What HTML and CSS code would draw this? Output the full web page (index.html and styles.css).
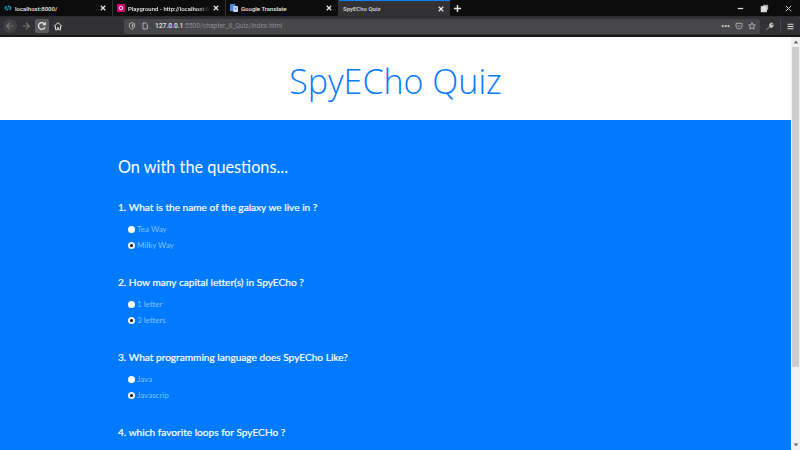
FILE: index.html
```html
<!DOCTYPE html>
<html lang="en">
<head>
    <meta charset="UTF-8">
    <meta name="viewport" content="width=device-width, initial-scale=1.0">
    <title>SpyECho Quiz</title>
    <link rel="stylesheet" href="styles.css">
</head>
<body>
    <!-- Tabs -->
    <div class="tabs">
        <div class="tab">
            <svg class="favicon" viewBox="0 0 12 12"><path d="M4 3 1.500 6 4 9M8 3l2.500 3L8 9" fill="none" stroke="#1fb6d8" stroke-width="1.600"/><path d="M7 2 5 10" stroke="#1fb6d8" stroke-width="1.200"/></svg>
            <span class="tab-title">localhost:8000/</span>
            <svg class="tab-close" viewBox="0 0 8 8"><path d="M1 1l6 6M7 1 1 7" stroke="#eee" stroke-width="1.500"/></svg>
        </div>
        <div class="tab">
            <svg class="favicon" viewBox="0 0 12 12"><rect width="12" height="12" rx="1.500" fill="#d6066f"/><circle cx="6" cy="6" r="2.600" fill="none" stroke="#fff" stroke-width="1.400"/></svg>
            <span class="tab-title tab-fade">Playground - http://localhost:8</span>
            <svg class="tab-close" viewBox="0 0 8 8"><path d="M1 1l6 6M7 1 1 7" stroke="#eee" stroke-width="1.500"/></svg>
        </div>
        <div class="tab">
            <svg class="favicon" viewBox="0 0 12 12"><rect width="8" height="11" rx="1" fill="#4a86e8"/><rect x="5" y="3" width="7" height="9" rx="1" fill="#c9d7f2"/><path d="M7 6h3M8.500 6v3" stroke="#4a6fb5"/></svg>
            <span class="tab-title">Google Translate</span>
            <svg class="tab-close" viewBox="0 0 8 8"><path d="M1 1l6 6M7 1 1 7" stroke="#eee" stroke-width="1.500"/></svg>
        </div>
        <div class="tab tab-active">
            <span class="tab-title">SpyECho Quiz</span>
            <svg class="tab-close" viewBox="0 0 8 8"><path d="M1 1l6 6M7 1 1 7" stroke="#eee" stroke-width="1.500"/></svg>
        </div>
        <svg class="new-tab" viewBox="0 0 10 10"><path d="M5 1v8M1 5h8" stroke="#e6e6e6" stroke-width="1.600"/></svg>
        <div class="window-btns">
            <svg viewBox="0 0 10 10"><path d="M2 5h6" stroke="#ddd" stroke-width="1.400"/></svg>
            <svg viewBox="0 0 10 10"><rect x="1.500" y="3" width="5.500" height="5.500" fill="#ddd" stroke="#ddd" stroke-width="1.300"/><path d="M3.500 1.500h5v5" fill="none" stroke="#ddd"/></svg>
            <svg viewBox="0 0 10 10"><path d="M2 2l6 6M8 2 2 8" stroke="#ccc" stroke-width="1.100"/></svg>
        </div>
    </div>

    <!-- Toolbar -->
    <div class="toolbar">
        <span class="nav-btn back">
            <svg viewBox="0 0 12 12"><path d="M10 6H2M6 2 2 6l4 4" fill="none" stroke="#777" stroke-width="1.300"/></svg>
        </span>
        <span class="nav-btn">
            <svg viewBox="0 0 12 12"><path d="M2 6h8M6 2l4 4-4 4" fill="none" stroke="#777" stroke-width="1.300"/></svg>
        </span>
        <span class="nav-btn reload">
            <svg viewBox="0 0 12 12"><path d="M9.500 7.500A4 4 0 1 1 9 3.500" fill="none" stroke="#eee" stroke-width="1.400"/><path d="M10.500 1v4h-4z" fill="#eee"/></svg>
        </span>
        <span class="nav-btn">
            <svg viewBox="0 0 12 12"><path d="M1 6.500 6 2l5 4.500M3 6v4.500h2.200V8h1.600v2.500H9V6" fill="none" stroke="#ddd" stroke-width="1.200"/></svg>
        </span>
        <div class="urlbar">
            <svg class="url-icon" viewBox="0 0 12 12"><path d="M6 1 2 2.500V6c0 2.500 2 4 4 5 2-1 4-2.500 4-5V2.500z" fill="none" stroke="#bbb" stroke-width="1.300"/><path d="M6 3v6c1-.6 2-1.500 2-3V3.500z" fill="#bbb"/></svg>
            <svg class="url-icon" viewBox="0 0 12 12"><path d="M3 1.500h4l2.500 2.500v6.500H3z" fill="none" stroke="#ccc" stroke-width="1.200"/></svg>
            <span class="url"><b>127.0.0.1</b>:5500/chapter_8_Quiz/index.html</span>
            <span class="url-dots">•••</span>
            <svg class="url-icon" viewBox="0 0 12 12"><path d="M1.500 2h9v4a4.500 4.500 0 0 1-9 0z" fill="none" stroke="#bbb" stroke-width="1.200"/><path d="M4 5l2 2 2-2" fill="none" stroke="#bbb" stroke-width="1.200"/></svg>
            <svg class="url-icon" viewBox="0 0 12 12"><path d="M6 1l1.500 3.300 3.500.4-2.600 2.400.7 3.500L6 8.900l-3.100 1.700.7-3.500L1 4.700l3.500-.4z" fill="none" stroke="#ccc" stroke-width="1.200"/></svg>
        </div>
        <svg class="tool-icon" viewBox="0 0 12 12"><path d="M2 10.500 6.500 6M6 4.500a3 3 0 0 1 4-3L8 3.500 9 5l2-1.500a3 3 0 0 1-4 3.500z" fill="#ccc" stroke="#ccc"/></svg>
        <span class="tool-sep"></span>
        <svg class="tool-icon" viewBox="0 0 12 12"><path d="M2 3h8M2 6h8M2 9h8" stroke="#ddd" stroke-width="1.500"/></svg>
    </div>

    <!-- Page -->
    <div class="viewport">
        <div class="page">
            <h1 class="titulo">SpyECho Quiz</h1>
            <div class="quiz">
                <h2>On with the questions...</h2>

                <div class="question">
                    <p class="q-text">1. What is the name of the galaxy we live in ?</p>
                    <label class="answer"><span class="radio"></span>Tea Way</label>
                    <label class="answer"><span class="radio checked"></span>Milky Way</label>
                </div>

                <div class="question">
                    <p class="q-text">2. How many capital letter(s) in SpyECho ?</p>
                    <label class="answer"><span class="radio"></span>1 letter</label>
                    <label class="answer"><span class="radio checked"></span>3 letters</label>
                </div>

                <div class="question">
                    <p class="q-text">3. What programming language does SpyECho Like?</p>
                    <label class="answer"><span class="radio"></span>Java</label>
                    <label class="answer"><span class="radio checked"></span>Javascrip</label>
                </div>

                <div class="question">
                    <p class="q-text">4. which favorite loops for SpyECHo ?</p>
                </div>
            </div>
        </div>
        <div class="scrollbar">
            <svg class="scroll-arrow" viewBox="0 0 8 8"><path d="M1 6 4 2l3 4z" fill="#666"/></svg>
            <span class="scroll-thumb"></span>
            <svg class="scroll-arrow" viewBox="0 0 8 8"><path d="M1 2 4 6l3-4z" fill="#666"/></svg>
        </div>
    </div>
</body>
</html>
```

FILE: styles.css
```css
* {
    box-sizing: border-box;
}
html, body {
    height: 100%;
}
body {
    margin: 0;
    overflow: hidden;
    font-family: Lato, "Noto Sans", sans-serif;
    display: flex;
    flex-direction: column;
}

/* tabs */
.tabs {
    height: 16px;
    background: #0c0c0d;
    display: flex;
    align-items: center;
    flex: none;
}
.tab {
    width: 113px;
    height: 16px;
    display: flex;
    align-items: center;
    padding: 0 4px;
    gap: 3px;
    border-right: 1px solid #333;
    color: #e8e8e8;
    font-family: Roboto, sans-serif;
    font-size: 6px;
    font-weight: 500;
}
.tab-title {
    flex: 1;
    overflow: hidden;
    white-space: nowrap;
}
.tab-fade {
    -webkit-mask-image: linear-gradient(to right, #000 85%, transparent);
    mask-image: linear-gradient(to right, #000 85%, transparent);
}
.tab-close {
    width: 6px;
    height: 6px;
    margin-right: 2px;
    flex: none;
}
.favicon {
    width: 8px;
    height: 8px;
    flex: none;
}
.tab-active {
    width: 111px;
    padding-left: 4px;
    background: #323234;
    border-top: 1px solid #0a84ff;
    border-right: 0;
    color: #d8d8d8;
}
.new-tab {
    width: 9px;
    height: 9px;
    margin-left: 3px;
}
.window-btns {
    margin-left: auto;
    display: flex;
    gap: 15px;
    padding-right: 7px;
}
.window-btns svg {
    width: 9px;
    height: 9px;
}

/* toolbar */
.toolbar {
    height: 21px;
    background: #323234;
    border-top: 1px solid #2a2a2b;
    border-bottom: 2px solid #17171a;
    display: flex;
    align-items: center;
    padding-left: 3px;
    flex: none;
}
.nav-btn {
    width: 14px;
    height: 14px;
    margin-right: 2px;
    display: flex;
    align-items: center;
    justify-content: center;
    border-radius: 2px;
}
.nav-btn svg {
    width: 10px;
    height: 10px;
}
.back {
    border-radius: 50%;
    background: #404042;
}
.reload {
    background: #5c5c5e;
}
.urlbar {
    margin-left: 57px;
    flex: 1;
    height: 15px;
    background: #47474a;
    border-radius: 2px;
    display: flex;
    align-items: center;
    gap: 5px;
    padding: 0 4px;
}
.url-icon {
    width: 8px;
    height: 8px;
    flex: none;
}
.url {
    flex: 1;
    margin-left: 1px;
    font-family: Roboto, sans-serif;
    font-size: 6.700px;
    color: #8e8e90;
    white-space: nowrap;
}
.url b {
    font-weight: 500;
    color: #e4e4e4;
}
.url-dots {
    color: #ccc;
    font-size: 5px;
}
.tool-icon {
    width: 9px;
    height: 9px;
    margin: 0 5px;
    flex: none;
}
.tool-sep {
    width: 1px;
    height: 14px;
    margin-left: 1px;
    background: #4a4a4c;
}

/* page */
.viewport {
    flex: 1;
    min-height: 0;
    display: flex;
    background: #fff;
}
.page {
    flex: 1;
    min-width: 0;
    overflow: hidden;
}
.titulo {
    margin: 0;
    height: 83px;
    padding-top: 20px;
    text-align: center;
    color: #0a7bff;
    font-family: "Open Sans", sans-serif;
    font-size: 34px;
    font-weight: 300;
    line-height: 48px;
}
.quiz {
    height: 330px;
    background: #007bff;
    color: #fff;
    padding: 35px 118px 0;
}
.quiz h2 {
    margin: 0 0 21px;
    font-size: 16.300px;
    font-weight: 400;
    line-height: 24px;
}
.question {
    height: 75px;
}
.q-text {
    margin: 0 0 7px;
    font-size: 10.150px;
    font-weight: 400;
    line-height: 14px;
    -webkit-text-stroke: 0.2px #fff;
}
.answer {
    display: flex;
    align-items: center;
    gap: 2px;
    height: 16px;
    padding-left: 10px;
    font-size: 8px;
    font-weight: 400;
    color: #86c0ff;
}
.radio {
    width: 7px;
    height: 7px;
    border-radius: 50%;
    background: #fff;
}
.radio.checked {
    border: 2px solid #f0f0f0;
    background: #111;
}

/* scrollbar */
.scrollbar {
    width: 9px;
    padding: 0 1px;
    background: #f0f0f0;
    flex: none;
    display: flex;
    flex-direction: column;
    align-items: center;
}
.scroll-arrow {
    width: 6px;
    height: 6px;
    margin: 2px 0;
    flex: none;
}
.scroll-thumb {
    width: 100%;
    height: 320px;
    margin-bottom: auto;
    background: #cdcdcd;
}
```
